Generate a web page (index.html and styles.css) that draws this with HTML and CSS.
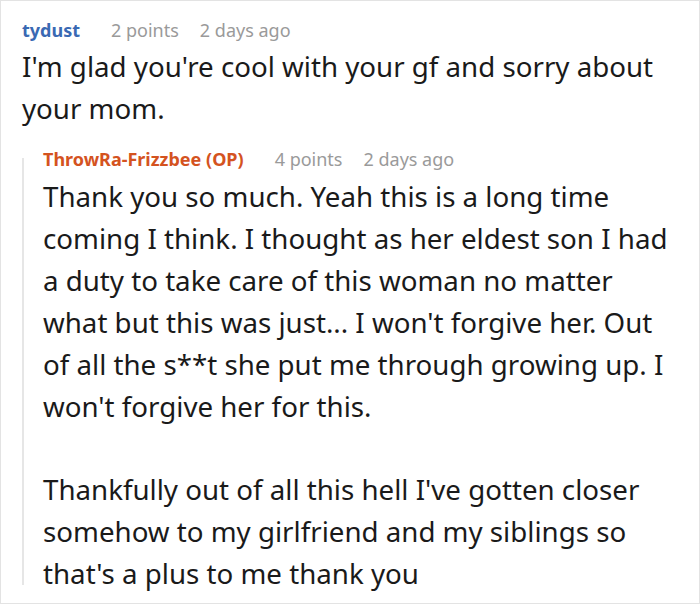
FILE: index.html
```html
<!DOCTYPE html>
<html lang="en">
<head>
<meta charset="utf-8">
<title>Comments</title>
<link rel="stylesheet" href="styles.css">
</head>
<body>
<div class="thread">
  <div class="comment">
    <div class="meta">
      <span class="author">tydust</span><span class="score">2 points</span><span class="time">2 days ago</span>
    </div>
    <div class="body first-body">
      <p>I'm glad you're cool with your gf and sorry about your mom.</p>
    </div>
  </div>
  <div class="reply">
    <div class="rule"></div>
    <div class="reply-content">
      <div class="meta">
        <span class="author op">ThrowRa-Frizzbee (OP)</span><span class="score">4 points</span><span class="time">2 days ago</span>
      </div>
      <div class="body reply-body">
        <p>Thank you so much. Yeah this is a long time coming I think. I thought as her eldest son I had a duty to take care of this woman no matter what but this was just... I won't forgive her. Out of all the s**t she put me through growing up. I won't forgive her for this.</p>
        <p>Thankfully out of all this hell I've gotten closer somehow to my girlfriend and my siblings so that's a plus to me thank you</p>
      </div>
    </div>
  </div>
</div>
</body>
</html>
```

FILE: styles.css
```css
html, body {
  margin: 0;
  padding: 0;
  background: #ffffff;
}

.thread {
  box-sizing: border-box;
  width: 700px;
  height: 604px;
  border: 1px solid #e3e3e3;
  padding: 17px 19px 0 21px;
  font-family: "Noto Sans", "Open Sans", sans-serif;
  color: #1a1a1a;
  overflow: hidden;
}

.meta {
  font-size: 18px;
  line-height: 24px;
  white-space: nowrap;
}

.author {
  font-weight: bold;
  color: #3a69b3;
  margin-right: 31px;
}

.author.op {
  color: #d4531f;
}

.score,
.time {
  color: #9a9a9a;
}

.time {
  margin-left: 21px;
}

.body {
  font-size: 27.7px;
  line-height: 42px;
}

.body p {
  margin: 0 0 41px 0;
}

.body p:last-child {
  margin-bottom: 0;
}

.first-body {
  margin-top: 3px;
}

.reply {
  display: flex;
  margin-top: 18px;
}

.rule {
  flex: 0 0 2px;
  background: #e6e6e6;
  margin: 11px 0 9px 0;
}

.reply-content {
  flex: 1;
  padding-left: 19px;
}

.reply-body {
  margin-top: 4px;
}
```
